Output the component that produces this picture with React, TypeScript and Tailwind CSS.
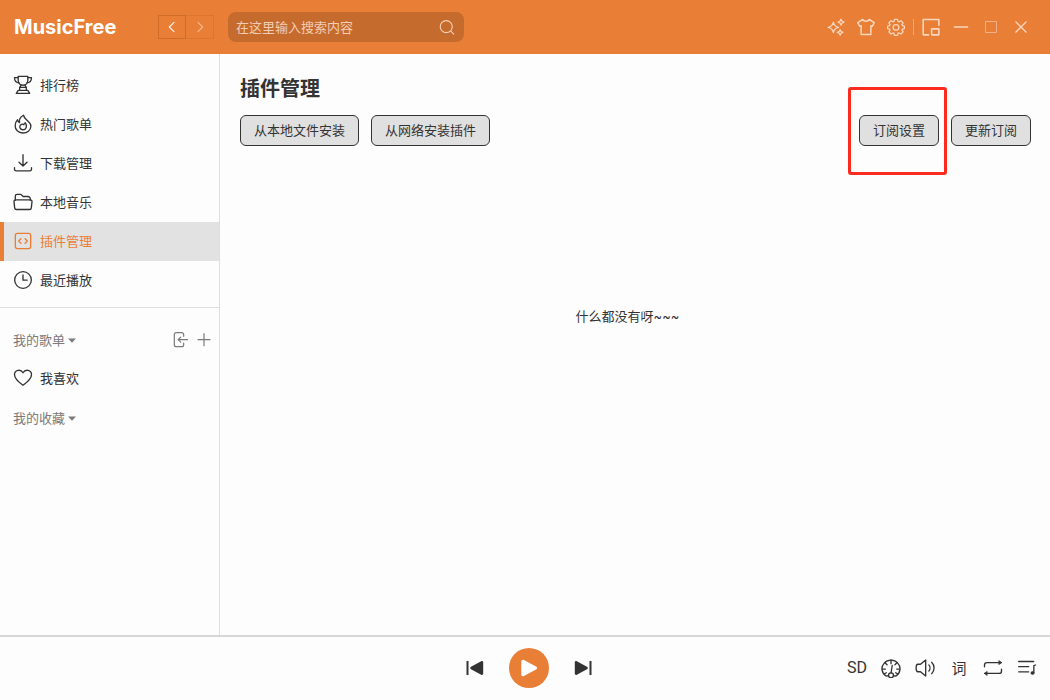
import type { ReactNode } from "react";

type IconProps = { children: ReactNode; className?: string; width?: number };

function Icon({ children, className = "size-5", width = 1.6 }: IconProps) {
  return (
    <svg
      viewBox="0 0 24 24"
      fill="none"
      stroke="currentColor"
      strokeWidth={width}
      strokeLinecap="round"
      strokeLinejoin="round"
      className={`${className} shrink-0`}
      aria-hidden="true"
    >
      {children}
    </svg>
  );
}

const TrophyIcon = () => (
  <Icon>
    <path d="M6.200 1.600h11.600v4.400c0 3.600-2.300 6.300-5.800 6.300s-5.800-2.700-5.800-6.300z" />
    <path d="M6.200 3.200H1.800c.1 3.800 2 6 5.600 6.300M17.800 3.200h4.400c-.1 3.800-2 6-5.600 6.300" />
    <path d="M9.800 12.200 8 14.800v3.600M14.200 12.200l1.800 2.600v3.600M6.200 18.400h11.600l2.200 3.700H4zM8 14.800h8" />
  </Icon>
);

const FireIcon = () => (
  <Icon>
    <path d="M12.600 1.500c.6 3 2.200 4 4.600 6.200 2.500 2.200 4.300 3.900 4.300 7a9.300 8.300 0 0 1-18.900-.6c0-2.900 1-5.300 2.900-7.200.3 1.700.9 2.700 2.300 3.400-.5-3.600 1.300-7.100 4.800-8.800z" />
    <path d="M14.700 10.500c-1 .4-1.600 1.200-1.600 2.400-1.400-.9-3-.8-4 .2-1.600 1.700-1.300 5.300 2.500 5.800 4.400.3 6-4.800 3.100-8.400z" />
  </Icon>
);

const DownloadIcon = () => (
  <Icon>
    <path d="M12 2v13.500M7.200 11l4.800 4.700 4.800-4.700M1.800 17.500v2a2 2 0 0 0 2 2h16.400a2 2 0 0 0 2-2v-2" />
  </Icon>
);

const FolderIcon = () => (
  <Icon>
    <path d="M2.800 10V4.800a2 2 0 0 1 2-2h4.400l3 2.600h5.600a3 3 0 0 1 3 3V10" />
    <path d="M3 9.500h18a1.800 1.800 0 0 1 1.800 2l-.8 7.500a2.200 2.200 0 0 1-2.200 2H4.200A2.200 2.200 0 0 1 2 19l-.8-7.500a1.800 1.800 0 0 1 1.800-2z" />
  </Icon>
);

const CodeIcon = () => (
  <Icon>
    <rect x="2.800" y="2.800" width="18.400" height="18.400" rx="2.500" />
    <path d="m9.500 9.300-2.700 2.700 2.700 2.700M14.500 9.300l2.700 2.700-2.700 2.700" />
  </Icon>
);

const ClockIcon = () => (
  <Icon>
    <circle cx="12" cy="12" r="10" />
    <path d="M12 6v6.200h5" />
  </Icon>
);

const HeartIcon = () => (
  <Icon>
    <path d="M12 20.800C7.500 17.300 1.800 13.200 1.800 8c0-5.600 7.300-7.300 10.200-2.300 2.900-5 10.200-3.300 10.200 2.300 0 5.200-5.700 9.300-10.200 12.800z" />
  </Icon>
);

const ImportIcon = () => (
  <Icon className="size-4" width={1.800}>
    <path d="M17.500 6.500V4a3 3 0 0 0-3-3h-8a3 3 0 0 0-3 3v15a3 3 0 0 0 3 3h8a3 3 0 0 0 3-3v-2.500" />
    <path d="M23.200 11.500H9.500M13 7.800l-3.800 3.700 3.800 3.700" />
  </Icon>
);

const PlusIcon = () => (
  <Icon className="size-4" width={1.800}>
    <path d="M12 2.500v18M3 11.500h18" />
  </Icon>
);

const NAV = [
  { label: "排行榜", icon: <TrophyIcon /> },
  { label: "热门歌单", icon: <FireIcon /> },
  { label: "下载管理", icon: <DownloadIcon /> },
  { label: "本地音乐", icon: <FolderIcon /> },
  { label: "插件管理", icon: <CodeIcon />, active: true },
  { label: "最近播放", icon: <ClockIcon /> },
];

function NavItem({ label, icon, active }: { label: string; icon: ReactNode; active?: boolean }) {
  return (
    <a
      href="#"
      aria-current={active ? "page" : undefined}
      className={
        active
          ? "flex h-[39px] items-center gap-[7px] border-l-4 border-[#e97e37] bg-[#e2e2e2] pb-px pl-[9px] text-[#e97e37]"
          : "flex h-[39px] items-center gap-[7px] border-l-4 border-transparent pb-px pl-[9px]"
      }
    >
      {icon}
      <span>{label}</span>
    </a>
  );
}

function GroupTitle({ label }: { label: string }) {
  return (
    <button type="button" className="flex items-center gap-[3px]">
      {label}
      <svg viewBox="0 0 8 6" className="h-1.5 w-2" fill="currentColor" aria-hidden="true">
        <path d="M0 1.500h8L4 5.800z" />
      </svg>
    </button>
  );
}

function WindowButton({ label, children, dim }: { label: string; children: ReactNode; dim?: boolean }) {
  return (
    <button
      type="button"
      aria-label={label}
      className={
        dim
          ? "flex h-[30px] w-[30px] items-center justify-center text-[#f3b088]"
          : "flex h-[30px] w-[30px] items-center justify-center text-[#fbd6bd]"
      }
    >
      {children}
    </button>
  );
}

function Header() {
  return (
    <header className="flex h-[54px] shrink-0 items-center bg-[#e97e37] pr-[14px] text-white">
      <div className="w-[158px] shrink-0 pl-[14px] font-[Inter,sans-serif] text-[20px] leading-6 font-bold">MusicFree</div>
      <div className="flex">
        <button type="button" aria-label="后退" className="flex h-6 w-7 items-center justify-center border border-[#d06c28] text-[#fff0e4]">
          <Icon className="size-4" width={1.800}>
            <path d="M15 5 8 12l7 7" />
          </Icon>
        </button>
        <button type="button" aria-label="前进" disabled className="flex h-6 w-7 items-center justify-center border border-l-0 border-[#dc7530] text-[#f5b48b]">
          <Icon className="size-4" width={1.800}>
            <path d="m9 5 7 7-7 7" />
          </Icon>
        </button>
      </div>
      <div className="ml-[14px] flex h-[30px] w-[236px] items-center rounded-lg bg-[#c66b2e] pr-2 pb-px pl-2">
        <input
          type="text"
          aria-label="搜索"
          placeholder="在这里输入搜索内容"
          className="min-w-0 flex-1 bg-transparent text-[13px] leading-5 text-white outline-none placeholder:text-[#f2cdb4]"
        />
        <button type="button" aria-label="搜索" className="text-[#f6cfb4]">
          <Icon className="size-[18px]" width={1.500}>
            <circle cx="11" cy="11.500" r="8" />
            <path d="m17 17.500 4 4" />
          </Icon>
        </button>
      </div>
      <div className="ml-auto flex items-center">
        <WindowButton label="特效">
          <Icon className="size-[18px]" width={1.800}>
            <path d="M8.500 5.500c.9 4.300 2.700 6.100 7 7-4.300.9-6.100 2.700-7 7-.9-4.300-2.700-6.100-7-7 4.300-.9 6.100-2.700 7-7zM18.700 1.500c.5 2.500 1.500 3.500 4 4-2.500.5-3.500 1.500-4 4-.5-2.500-1.500-3.500-4-4 2.500-.5 3.500-1.500 4-4zM17.500 15.500c.5 2.300 1.400 3.200 3.700 3.700-2.300.5-3.200 1.400-3.700 3.700-.5-2.300-1.400-3.200-3.700-3.700 2.300-.5 3.200-1.400 3.700-3.700z" />
          </Icon>
        </WindowButton>
        <WindowButton label="主题">
          <Icon className="size-[18px]" width={2}>
            <path d="M7.500 2 1 6.200l2.500 4.800 2-.8V22h13V10.200l2 .8L23 6.200 16.500 2c-1.700 2.900-7.300 2.900-9 0z" />
          </Icon>
        </WindowButton>
        <WindowButton label="设置">
          <Icon className="size-[18px]" width={1.700}>
            <path d="M9.900 1.800h4.200l.6 2.700 1.500.6 2.400-1.500 2.900 2.900L20 8.900l.6 1.400 2.600.6v3.200l-2.600.6-.6 1.400 1.500 2.400-2.900 2.900-2.400-1.500-1.500.6-.6 2.700H9.900l-.6-2.700-1.500-.6-2.400 1.500-2.900-2.900L4 16.100l-.6-1.400-2.600-.6v-3.200l2.600-.6L4 8.900 2.500 6.500l2.900-2.900 2.400 1.500 1.500-.6z" />
            <circle cx="12" cy="12.500" r="3.800" />
          </Icon>
        </WindowButton>
        <div className="mx-0.5 h-4 w-px bg-[#f2a878]" />
        <WindowButton label="迷你模式">
          <Icon className="size-5" width={1.900}>
            <path d="M9 21.400H2.600V3h18.800v7" />
            <path d="M12.800 14.200h8.600v7.200h-8.600z" />
          </Icon>
        </WindowButton>
        <WindowButton label="最小化">
          <Icon className="size-4" width={1.900}>
            <path d="M2 12h20" />
          </Icon>
        </WindowButton>
        <WindowButton label="最大化" dim>
          <svg viewBox="0 0 12 12" className="size-3" fill="none" stroke="currentColor" aria-hidden="true">
            <path d="M.5.5h11v11H.5z" />
          </svg>
        </WindowButton>
        <WindowButton label="关闭">
          <svg viewBox="0 0 12 12" className="size-3" fill="none" stroke="currentColor" strokeWidth="1.300" aria-hidden="true">
            <path d="m.5.5 11 11M11.500.5l-11 11" />
          </svg>
        </WindowButton>
      </div>
    </header>
  );
}

function Sidebar() {
  return (
    <aside className="w-[220px] shrink-0 border-r border-[#dedede]">
      <nav className="border-b border-[#dedede] pt-3 pb-[7px]">
        {NAV.map((item) => (
          <NavItem key={item.label} {...item} />
        ))}
      </nav>
      <div className="pt-3">
        <div className="flex h-[39px] items-center pr-[7px] pl-[13px] text-[#7b7b7b]">
          <GroupTitle label="我的歌单" />
          <div className="ml-auto flex gap-2">
            <button type="button" aria-label="导入歌单">
              <ImportIcon />
            </button>
            <button type="button" aria-label="新建歌单">
              <PlusIcon />
            </button>
          </div>
        </div>
        <NavItem label="我喜欢" icon={<HeartIcon />} />
        <div className="flex h-[39px] items-center pl-[13px] text-[#7b7b7b]">
          <GroupTitle label="我的收藏" />
        </div>
      </div>
    </aside>
  );
}

function ActionButton({ children }: { children: string }) {
  return (
    <button type="button" className="h-[31px] rounded-md border border-[#333] bg-[#e0e0e0] px-3 pb-px">
      {children}
    </button>
  );
}

function Content() {
  return (
    <main className="min-w-0 flex-1 pt-5 pr-[19px] pl-5">
      <h1 className="text-[20px] leading-7 font-bold">插件管理</h1>
      <div className="mt-[13px] flex gap-3 [&_button]:px-[13px]">
        <ActionButton>从本地文件安装</ActionButton>
        <ActionButton>从网络安装插件</ActionButton>
        <div className="relative ml-auto">
          <ActionButton>订阅设置</ActionButton>
          <div className="pointer-events-none absolute -top-7 -right-2 -bottom-[29px] -left-[11px] rounded-[3px] border-3 border-[#fb2b20]" />
        </div>
        <ActionButton>更新订阅</ActionButton>
      </div>
      <p className="mt-40 pr-4 text-center font-[Inter,'Noto_Sans_CJK_SC',sans-serif]">什么都没有呀~~~</p>
    </main>
  );
}

function PlayerButton({ label, children }: { label: string; children: ReactNode }) {
  return (
    <button type="button" aria-label={label} className="flex size-5 items-center justify-center">
      {children}
    </button>
  );
}

function Player() {
  return (
    <footer className="grid h-[65px] shrink-0 grid-cols-[1fr_auto_1fr] items-center border-t-2 border-[#d6d6d6] pb-px">
      <div />
      <div className="flex items-center gap-6 pl-2">
        <button type="button" aria-label="上一首" className="p-px">
          <svg viewBox="0 0 18 16" className="h-4 w-[18px]" fill="currentColor" aria-hidden="true">
            <path d="M.5 1h2v14h-2zM15.200 1.300 5 6.700a1.500 1.500 0 0 0 0 2.600l10.200 5.400c1 .5 2-.1 2-1.200v-11c0-1.100-1-1.700-2-1.200z" />
          </svg>
        </button>
        <button type="button" aria-label="播放" className="flex size-10 items-center justify-center rounded-full bg-[#e97e37] text-white">
          <svg viewBox="0 0 18 18" className="size-[18px]" fill="currentColor" aria-hidden="true">
            <path d="M1.300 2.500C1.300 1 2.700.2 4 .9l12 6.500c1.500.8 1.500 2.300 0 3.100L4 17.100c-1.300.7-2.700-.1-2.700-1.600z" />
          </svg>
        </button>
        <button type="button" aria-label="下一首" className="p-px">
          <svg viewBox="0 0 18 16" className="h-4 w-[18px]" fill="currentColor" aria-hidden="true">
            <path d="M15.500 1h2v14h-2zM2.800 1.300 13 6.700a1.500 1.500 0 0 1 0 2.600L2.800 14.700c-1 .5-2-.1-2-1.200v-11c0-1.100 1-1.700 2-1.200z" />
          </svg>
        </button>
      </div>
      <div className="flex items-center gap-[14px] justify-self-end pr-[13px]">
        <button
          type="button"
          className="flex h-5 w-5 items-center justify-center font-['Liberation_Sans_Narrow',Roboto,sans-serif] text-[16px] leading-5"
        >
          SD
        </button>
        <PlayerButton label="倍速">
          <Icon>
            <path d="M8.800 21.400 6 21.600A10.800 10.400 0 1 1 18 21.600l-2.800-.2" />
            <circle cx="12" cy="20.800" r="3" />
            <path d="M12.100 17.700 13.500 9M12 2.200v4.600M4.800 5.800l2.500 2.400M19.200 5.800l-2.500 2.400M1.800 13.300h3.400M22.200 13.300h-3.400M4 19l2.400-1.300M20 19l-2.400-1.300" />
          </Icon>
        </PlayerButton>
        <PlayerButton label="音量">
          <Icon>
            <path d="M12.800 2.300v19.400L6.600 16.500H3.500c-1.500 0-2.200-1.800-2.200-4.500s.7-4.500 2.200-4.500h3.100z" />
            <path d="M16.600 8.300c1.800 2 1.800 5.400 0 7.400M20 5.200c3.800 3.800 3.800 9.800 0 13.600" />
          </Icon>
        </PlayerButton>
        <button type="button" className="flex h-5 w-5 items-center justify-center text-[15px] leading-5">
          词
        </button>
        <PlayerButton label="循环模式">
          <Icon width={1.600}>
            <path d="M1.800 10.500V8.500a3 3 0 0 1 3-3H22M22.200 13.500v2a3 3 0 0 1-3 3H2" />
            <path d="m19.300 3.300 3.200 2.200-3.200 2.200zM4.700 16.300l-3.200 2.200 3.200 2.200z" fill="currentColor" strokeWidth=".8" />
          </Icon>
        </PlayerButton>
        <PlayerButton label="播放列表">
          <Icon width={1.600}>
            <path d="M2 4.200h18M2 10.400h12M2 16.600h12M20.200 18V9.200l2-.8" />
            <ellipse cx="18.600" cy="18" rx="1.600" ry="1.400" fill="currentColor" />
          </Icon>
        </PlayerButton>
      </div>
    </footer>
  );
}

export default function App() {
  return (
    <div className="flex h-screen flex-col bg-[#fdfdfd] font-['Noto_Sans_CJK_SC',sans-serif] text-[13px] leading-5 text-[#333]">
      <Header />
      <div className="flex min-h-0 flex-1">
        <Sidebar />
        <Content />
      </div>
      <Player />
    </div>
  );
}
